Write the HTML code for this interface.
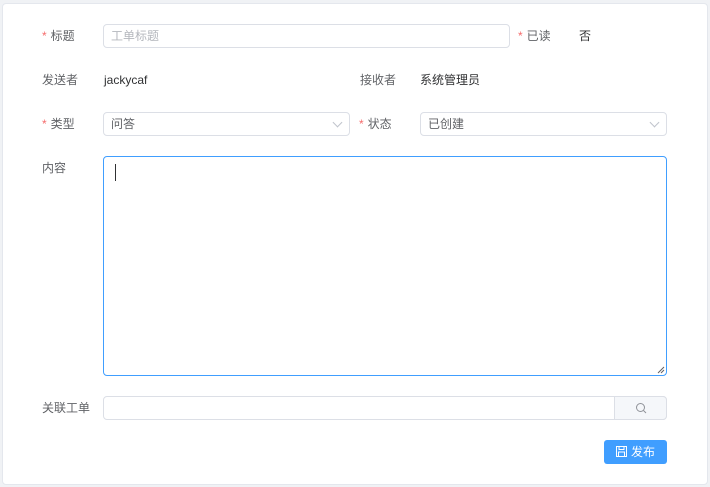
<!DOCTYPE html>
<html><head><meta charset="utf-8"><style>
body{margin:0;width:710px;height:487px;background:#f0f2f5;font-family:"Liberation Sans","Noto Sans CJK SC",sans-serif;font-size:12px;color:#606266;position:relative;overflow:hidden}
.card{position:absolute;left:2px;top:3px;width:704px;height:480px;background:#fff;border:1px solid #e4e7ed;border-radius:4px}
.a{position:absolute;line-height:24px;white-space:nowrap;margin-top:1px}
.s{color:#f56c6c;margin-right:4px}
.in{position:absolute;box-sizing:border-box;border:1px solid #dcdfe6;border-radius:4px;background:#fff;height:24px;line-height:22px;padding-left:7px;color:#606266}
.arr{position:absolute;right:8px;top:6px;width:6px;height:6px;border-right:1px solid #c0c4cc;border-bottom:1px solid #c0c4cc;transform:rotate(45deg)}
.v{color:#303133}
</style></head><body>
<div class="card"></div>
<div class="a" style="left:42px;top:23px"><span class="s">*</span>标题</div>
<div class="in" style="left:103px;top:24px;width:407px;color:#b4b7bd">工单标题</div>
<div class="a" style="left:518px;top:23px"><span class="s">*</span>已读</div>
<div class="a v" style="left:579px;top:23px">否</div>
<div class="a" style="left:42px;top:67px">发送者</div>
<div class="a v" style="left:104px;top:67px">jackycaf</div>
<div class="a" style="left:360px;top:67px">接收者</div>
<div class="a v" style="left:420px;top:67px">系统管理员</div>
<div class="a" style="left:42px;top:111px"><span class="s">*</span>类型</div>
<div class="in" style="left:103px;top:112px;width:247px">问答<div class="arr"></div></div>
<div class="a" style="left:359px;top:111px"><span class="s">*</span>状态</div>
<div class="in" style="left:420px;top:112px;width:247px">已创建<div class="arr"></div></div>
<div class="a" style="left:42px;top:155px">内容</div>
<div style="position:absolute;left:103px;top:156px;width:564px;height:220px;box-sizing:border-box;border:1px solid #409eff;border-radius:4px"><div style="position:absolute;left:11px;top:7px;width:1px;height:17px;background:#303133"></div>
<svg width="8" height="8" style="position:absolute;right:1px;bottom:1px" viewBox="0 0 8 8"><path d="M1 7L7 1M4 7L7 4" stroke="#606266"/></svg></div>
<div class="a" style="left:42px;top:395px">关联工单</div>
<div class="in" style="left:103px;top:396px;width:564px"></div>
<div style="position:absolute;left:614px;top:396px;width:53px;height:24px;box-sizing:border-box;border:1px solid #dcdfe6;border-radius:0 4px 4px 0;background:#f5f7fa">
<svg width="12" height="12" style="position:absolute;left:20px;top:5px" viewBox="0 0 12 12"><circle cx="5.5" cy="5.5" r="4" fill="none" stroke="#909399" stroke-width="1"/><path d="M8.5 8.5L11 11" stroke="#909399"/></svg></div>
<div style="position:absolute;left:604px;top:440px;width:63px;height:24px;background:#409eff;border-radius:3px;color:#fff;line-height:24px;font-size:12px">
<svg width="11" height="11" style="position:absolute;left:12px;top:6px" viewBox="0 0 11 11"><rect x="0.5" y="0.5" width="10" height="10" fill="none" stroke="#fff"/><rect x="3" y="0.5" width="5" height="3" fill="none" stroke="#fff"/><rect x="2.5" y="6" width="6" height="4.5" fill="none" stroke="#fff"/></svg>
<span style="position:absolute;left:27px">发布</span></div>
</body></html>
